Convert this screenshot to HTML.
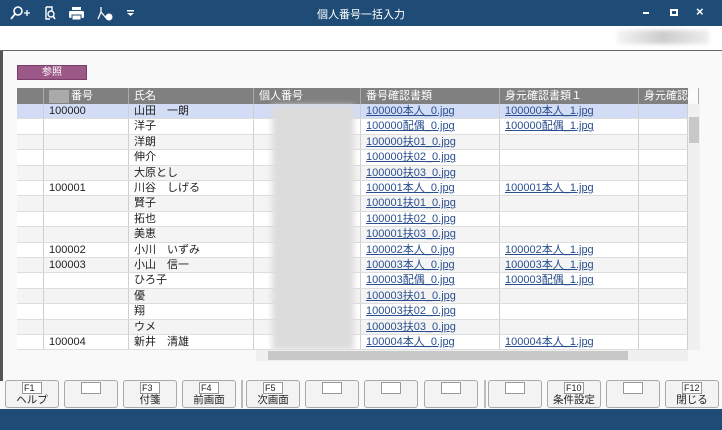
<!DOCTYPE html><html><head><meta charset="utf-8"><style>
*{box-sizing:border-box;margin:0;padding:0}
body{width:722px;height:430px;overflow:hidden;background:#f9f9f9;font-family:"Liberation Sans","Noto Sans CJK JP",sans-serif;font-size:11px;color:#222;position:relative}
.a{position:absolute}
.title{left:0;top:0;width:722px;height:26px;background:#1f4c77;color:#fff}
.tb{left:0;top:26px;width:722px;height:25px;background:#fff;border-bottom:1px solid #666}
.row{position:absolute;left:17px;width:671px;height:15.4px;border-bottom:1px solid #ddd}
.c{position:absolute;top:0;height:100%;border-right:1px solid #cfcfcf;padding-left:5px;line-height:15px;white-space:nowrap;overflow:hidden}
.hd .c{color:#fff;border-right:1px solid #aaa;line-height:17px}
a{color:#2a4f8f;text-decoration:underline}
.btn{position:absolute;top:380px;width:54px;height:28px;background:#f3f3f3;border:1px solid #aaa;border-radius:3px;text-align:center;font-size:10px}
.btn .k{display:block;margin:1px auto 0;width:20px;height:12px;border:1px solid #999;background:#fff;font-size:9px;line-height:10px;text-align:left;padding-left:1px}
.btn .l{display:block;line-height:13px;font-size:10.5px}
</style></head><body>
<div class="a title">
<svg class="a" style="left:10px;top:6px" width="22" height="14"><circle cx="8" cy="5" r="4" fill="none" stroke="#fff" stroke-width="1.6"/><line x1="5" y1="8" x2="1" y2="13" stroke="#fff" stroke-width="1.8"/><path d="M14 7h6M17 4v6" stroke="#fff" stroke-width="1.3"/></svg>
<svg class="a" style="left:42px;top:6px" width="14" height="15"><path d="M4 1h6v4M4 1v12h4" fill="none" stroke="#fff" stroke-width="1.4"/><circle cx="9" cy="8" r="3" fill="none" stroke="#fff" stroke-width="1.4"/><line x1="11" y1="10" x2="13" y2="13" stroke="#fff" stroke-width="1.6"/></svg>
<svg class="a" style="left:68px;top:6px" width="17" height="15"><rect x="4" y="1" width="9" height="3" fill="#fff"/><rect x="1" y="5" width="15" height="7" rx="1.5" fill="#fff"/><rect x="4" y="9" width="9" height="5" fill="#fff" stroke="#1f4c77"/></svg>
<svg class="a" style="left:97px;top:6px" width="17" height="15"><path d="M4 1v5L1 13M4 6l6 7" fill="none" stroke="#fff" stroke-width="1.3"/><circle cx="12" cy="11" r="3.5" fill="#fff"/></svg>
<svg class="a" style="left:127px;top:10px" width="8" height="7"><rect x="0" y="0" width="7" height="1.5" fill="#fff"/><path d="M0 3h7l-3.5 3z" fill="#fff"/></svg>
<div class="a" style="left:0;width:722px;top:6px;text-align:center;font-size:11px">個人番号一括入力</div>
<div class="a" style="left:643px;top:12px;width:6px;height:2px;background:#fff"></div>
<div class="a" style="left:670px;top:9px;width:8px;height:7px;border:2px solid #fff"></div>
<div class="a" style="left:696px;top:4px;font-size:13px;font-weight:bold">×</div>
</div>
<div class="a tb"><div class="a" style="top:4px;width:92px;height:14px;background:linear-gradient(90deg,#f4f4f4,#ccc 50%,#eee);filter:blur(2px);left:617px"></div></div>
<div class="a" style="left:0;top:51px;width:3px;height:330px;background:#555"></div>
<div class="a" style="left:17px;top:65px;width:70px;height:15px;background:#9c5887;border:1px solid #7a3e6a;color:#fff;text-align:center;font-size:10px;line-height:13px">参照</div>

<div class="row hd" style="top:88px;height:16px;background:#808080;border:none">
<div class="c" style="left:0;width:27px"></div>
<div class="c" style="left:27px;width:85px"><span style="display:inline-block;width:20px;height:13px;background:#aaa;vertical-align:top;margin:2px 2px 0 0"></span>番号</div>
<div class="c" style="left:112px;width:125px">氏名</div>
<div class="c" style="left:237px;width:107px">個人番号</div>
<div class="c" style="left:344px;width:139px">番号確認書類</div>
<div class="c" style="left:483px;width:139px">身元確認書類１</div>
<div class="c" style="left:622px;width:60px">身元確認書</div>
</div>
<div id="rows"></div>
<div class="a" style="left:272px;top:105px;width:82px;height:245px;background:#dcdcdc;filter:blur(3px)"></div>
<div class="a" style="left:688px;top:104px;width:12px;height:246px;background:#f0f0f0"></div>
<div class="a" style="left:689px;top:117px;width:10px;height:26px;background:#c8c8c8"></div>
<div class="a" style="left:256px;top:350px;width:432px;height:11px;background:#f0f0f0"></div>
<div class="a" style="left:268px;top:351px;width:360px;height:9px;background:#c8c8c8"></div>

<div class="a" style="left:241px;top:380px;width:2px;height:28px;border-left:1px solid #bbb;border-right:1px solid #bbb"></div>
<div class="a" style="left:484px;top:380px;width:2px;height:28px;border-left:1px solid #bbb;border-right:1px solid #bbb"></div>
<div class="btn" style="left:5px"><span class="k">F1</span><span class="l">ヘルプ</span></div>
<div class="btn" style="left:64px"><span class="k"></span></div>
<div class="btn" style="left:123px"><span class="k">F3</span><span class="l">付箋</span></div>
<div class="btn" style="left:182px"><span class="k">F4</span><span class="l">前画面</span></div>
<div class="btn" style="left:246px"><span class="k">F5</span><span class="l">次画面</span></div>
<div class="btn" style="left:305px"><span class="k"></span></div>
<div class="btn" style="left:364px"><span class="k"></span></div>
<div class="btn" style="left:424px"><span class="k"></span></div>
<div class="btn" style="left:488px"><span class="k"></span></div>
<div class="btn" style="left:547px"><span class="k">F10</span><span class="l">条件設定</span></div>
<div class="btn" style="left:606px"><span class="k"></span></div>
<div class="btn" style="left:665px"><span class="k">F12</span><span class="l">閉じる</span></div>
<div class="a" style="left:0;top:409px;width:722px;height:21px;background:#1f4c77"></div>
<script>
var d=[["100000","山田　一朗","100000本人_0.jpg","100000本人_1.jpg"],["","洋子","100000配偶_0.jpg","100000配偶_1.jpg"],["","洋朗","100000扶01_0.jpg",""],["","伸介","100000扶02_0.jpg",""],["","大原とし","100000扶03_0.jpg",""],["100001","川谷　しげる","100001本人_0.jpg","100001本人_1.jpg"],["","賢子","100001扶01_0.jpg",""],["","拓也","100001扶02_0.jpg",""],["","美恵","100001扶03_0.jpg",""],["100002","小川　いずみ","100002本人_0.jpg","100002本人_1.jpg"],["100003","小山　信一","100003本人_0.jpg","100003本人_1.jpg"],["","ひろ子","100003配偶_0.jpg","100003配偶_1.jpg"],["","優","100003扶01_0.jpg",""],["","翔","100003扶02_0.jpg",""],["","ウメ","100003扶03_0.jpg",""],["100004","新井　清雄","100004本人_0.jpg","100004本人_1.jpg"]];
var h="";d.forEach(function(r,i){var bg=i==0?"#d3dcf5":(i%2?"#fff":"#f4f4f4");
h+='<div class="row" style="top:'+(104+i*15.4)+'px;background:'+bg+'"><div class="c" style="left:0;width:27px"></div><div class="c" style="left:27px;width:85px">'+r[0]+'</div><div class="c" style="left:112px;width:125px">'+r[1]+'</div><div class="c" style="left:237px;width:107px"></div><div class="c" style="left:344px;width:139px"><a>'+r[2]+'</a></div><div class="c" style="left:483px;width:139px">'+(r[3]?'<a>'+r[3]+'</a>':'')+'</div><div class="c" style="left:622px;width:49px"></div></div>';});
document.getElementById("rows").innerHTML=h;
</script>
</body></html>
